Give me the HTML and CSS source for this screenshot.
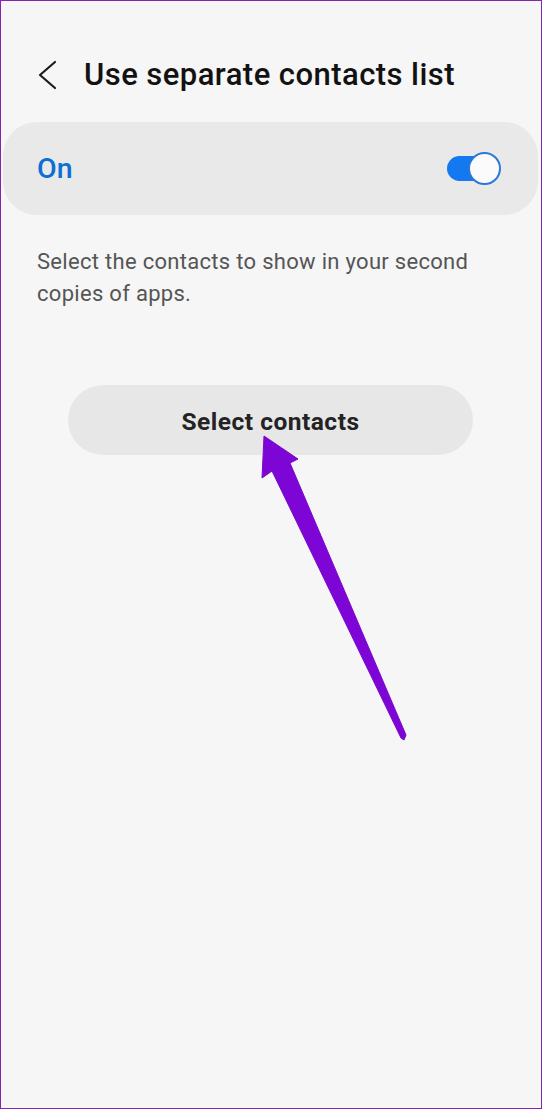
FILE: index.html
```html
<!DOCTYPE html>
<html>
<head>
<meta charset="utf-8">
<link rel="stylesheet" href="styles.css">
</head>
<body>
<div class="frame">
  <header class="header">
    <svg class="back" width="20" height="30" viewBox="0 0 20 30"><polyline points="17,2 2,15 17,28" fill="none" stroke="#1c1c1c" stroke-width="2.2" stroke-linecap="round" stroke-linejoin="round"/></svg>
    <h1 class="title">Use separate contacts list</h1>
  </header>
  <div class="card">
    <span class="on">On</span>
    <span class="toggle"><span class="track"></span><span class="thumb"></span></span>
  </div>
  <p class="desc">Select the contacts to show in your second copies of apps.</p>
  <div class="btn">Select contacts</div>
  <svg class="arrow" width="542" height="1109" viewBox="0 0 542 1109">
    <polygon points="264,436 298,459 290,463 406,735 404,740 401,738 272,471 262,478" fill="#7d05d6" stroke="#7a08cc" stroke-width="1" stroke-linejoin="round"/>
  </svg>
</div>
</body>
</html>
```

FILE: styles.css
```css
html, body {
  margin: 0;
  padding: 0;
  background: #f6f6f6;
}
.frame {
  position: relative;
  box-sizing: border-box;
  width: 542px;
  height: 1109px;
  border: 1px solid #8324b3;
  background: #f6f6f6;
  font-family: Roboto, "Noto Sans", sans-serif;
  overflow: hidden;
}
.header {
  display: flex;
  align-items: center;
  padding-top: 56px;
  height: 36px;
}
.back {
  margin-left: 37px;
  width: 20px;
  height: 30px;
}
.title {
  margin: 0 0 0 26px;
  font-size: 31px;
  line-height: 36px;
  font-weight: 500;
  color: #121212;
  letter-spacing: 0.45px;
}
.card {
  margin: 29px 3px 0 2px;
  height: 93px;
  border-radius: 34px;
  background: #e9e9e9;
  display: flex;
  align-items: center;
  justify-content: space-between;
  padding: 0 37px 0 34px;
}
.on {
  font-size: 28.5px;
  color: #0c6fd3;
  font-weight: 500;
}
.toggle {
  position: relative;
  width: 54px;
  height: 32px;
  margin-top: -2px;
}
.track {
  position: absolute;
  left: 0;
  top: 4px;
  width: 44px;
  height: 25px;
  border-radius: 13px;
  background: #1479f0;
}
.thumb {
  position: absolute;
  right: 0;
  top: 0;
  box-sizing: border-box;
  width: 33px;
  height: 33px;
  border-radius: 50%;
  background: #fbfbfb;
  border: 2px solid #2a78d8;
}
.desc {
  margin: 31px 30px 0 36px;
  font-size: 22px;
  line-height: 32px;
  color: #555555;
  letter-spacing: 0.3px;
}
.btn {
  margin: 75px 0 0 67px;
  width: 405px;
  height: 70px;
  border-radius: 35px;
  background: #e7e7e7;
  display: flex;
  align-items: center;
  justify-content: center;
  padding-top: 2px;
  box-sizing: border-box;
  font-size: 24.5px;
  font-weight: 700;
  color: #232323;
  letter-spacing: 0.5px;
}
.arrow {
  position: absolute;
  left: -1px;
  top: -1px;
  pointer-events: none;
}
```
